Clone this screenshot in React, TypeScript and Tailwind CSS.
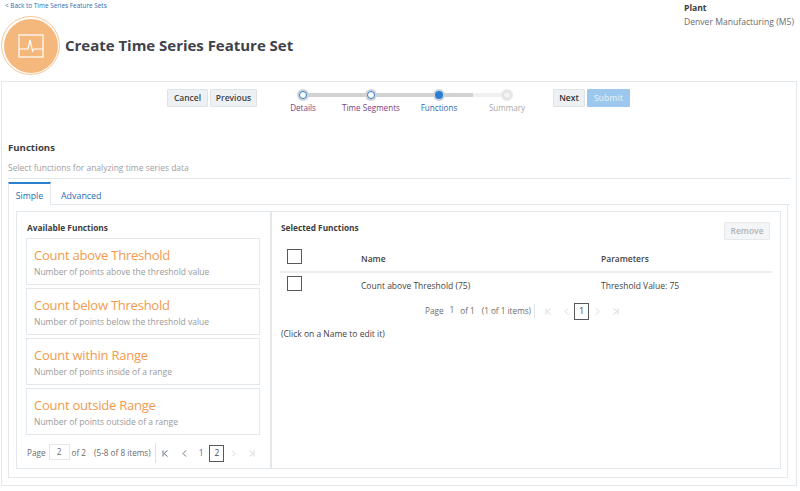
import React from "react";

const FUNCTIONS = [
  { name: "Count above Threshold", desc: "Number of points above the threshold value" },
  { name: "Count below Threshold", desc: "Number of points below the threshold value" },
  { name: "Count within Range", desc: "Number of points inside of a range" },
  { name: "Count outside Range", desc: "Number of points outside of a range" },
];

const STEPS = [
  { label: "Details", state: "done" },
  { label: "Time Segments", state: "done" },
  { label: "Functions", state: "active" },
  { label: "Summary", state: "todo" },
];

function Button({ label, className }: { label: string; className: string }) {
  return (
    <button
      className={`h-[18px] flex items-center justify-center rounded-[1px] border text-[8.5px] font-semibold ${className}`}
    >
      {label}
    </button>
  );
}

function StepDot({ state }: { state: string }) {
  if (state === "done") {
    return (
      <span className="w-[12px] h-[12px] rounded-full bg-[#cfd3d6] flex items-center justify-center">
        <span className="w-[8px] h-[8px] rounded-full bg-white border border-[#2f80d0]" />
      </span>
    );
  }
  if (state === "active") {
    return (
      <span className="w-[12px] h-[12px] rounded-full bg-[#cfd3d6] flex items-center justify-center">
        <span className="w-[8px] h-[8px] rounded-full bg-[#2a7fd4]" />
      </span>
    );
  }
  return (
    <span className="w-[12px] h-[12px] rounded-full bg-[#e8e9ea] flex items-center justify-center">
      <span className="w-[8px] h-[8px] rounded-full bg-[#f4f4f4] border border-[#dcdcdc]" />
    </span>
  );
}

function Stepper() {
  return (
    <div className="relative w-[272px] flex">
      <div className="absolute left-[34px] top-[4px] w-[170px] h-[4px] bg-[#d2d2d2]" />
      <div className="absolute left-[204px] top-[4px] w-[34px] h-[4px] bg-[#f0f0f0]" />
      {STEPS.map((s) => (
        <div key={s.label} className="relative w-[68px] flex flex-col items-center">
          <StepDot state={s.state} />
          <span
            className={`mt-[1px] text-[8.1px] leading-[12px] whitespace-nowrap ${
              s.state === "done"
                ? "text-[#7b3f86]"
                : s.state === "active"
                  ? "text-[#2b6cb0]"
                  : "text-[#a9a9a9]"
            }`}
          >
            {s.label}
          </span>
        </div>
      ))}
    </div>
  );
}

function PagerIcon({ kind, light }: { kind: "first" | "prev" | "next" | "last"; light?: boolean }) {
  const d = {
    first: "M2 1.5v6M6.5 1.5 3 4.5 6.5 7.5",
    prev: "M6 1.5 3 4.5 6 7.5",
    next: "M3 1.5 6 4.5 3 7.5",
    last: "M7 1.5v6M2.5 1.5 6 4.5 2.5 7.5",
  }[kind];
  return (
    <svg width="9" height="9" viewBox="0 0 9 9" fill="none" stroke={light ? "#d5d8db" : "#6b7280"} strokeWidth="1">
      <path d={d} />
    </svg>
  );
}

function Checkbox() {
  return <span className="block w-[15px] h-[15px] border border-[#55585c] bg-white mb-[7px]" />;
}

function AvailablePanel() {
  return (
    <div className="w-[255px] shrink-0 pl-[9px] pr-[10px] border-r-[2px] border-[#e3e8ec]">
      <h3 className="mt-[8px] ml-[1px] text-[8.3px] leading-[16px] font-bold text-[#3d3d3d]">Available Functions</h3>
      <div className="mt-[2px] flex flex-col gap-[3px]">
        {FUNCTIONS.map((f) => (
          <div key={f.name} className="h-[47px] border border-[#e3e8ec] px-[7px] pt-[6px]">
            <div className="text-[13px] leading-[21px] tracking-[-0.24px] text-[#f39a4e]">{f.name}</div>
            <div className="text-[8.5px] leading-[12px] text-[#9a9a9a]">{f.desc}</div>
          </div>
        ))}
      </div>
      <div className="mt-[8px] ml-[1px] flex items-center text-[8.2px] text-[#6b6b6b] h-[20px]">
        <span>Page</span>
        <span className="ml-[3px] w-[21px] h-[16px] border border-[#e3e8ec] flex items-center justify-center mb-[2px]">
          2
        </span>
        <span className="ml-[2px]">of 2</span>
        <span className="ml-[8px]">(5-8 of 8 items)</span>
        <span className="ml-[4px] h-[20px] border-l border-[#dfe3e6]" />
        <span className="ml-[5px] flex items-center gap-[10px]">
          <PagerIcon kind="first" />
          <PagerIcon kind="prev" />
        </span>
        <span className="ml-[10px] text-[#2b6cb0]">1</span>
        <span className="ml-[6px] w-[15px] h-[17px] border border-[#55585c] flex items-center justify-center text-[#444]">
          2
        </span>
        <span className="ml-[5px] flex items-center gap-[9px]">
          <PagerIcon kind="next" light />
          <PagerIcon kind="last" light />
        </span>
      </div>
    </div>
  );
}

function SelectedPanel() {
  return (
    <div className="flex-1 pl-[9px] pr-[8px]">
      <div className="flex justify-between items-start pt-[8px] h-[36px]">
        <h3 className="text-[8.3px] leading-[16px] font-bold text-[#3d3d3d]">Selected Functions</h3>
        <button className="mt-[2px] mr-[2px] w-[46px] h-[18px] rounded-[1px] border border-[#e6e9eb] bg-[#f3f5f6] text-[8.5px] font-semibold text-[#b0b4b8]">
          Remove
        </button>
      </div>
      <div className="-ml-[1px] flex items-center h-[25px] border-b-[2px] border-[#eceeef] text-[8.5px] font-semibold text-[#444]">
        <span className="ml-[7px] w-[74px]">
          <Checkbox />
        </span>
        <span className="w-[240px]">Name</span>
        <span>Parameters</span>
      </div>
      <div className="-ml-[1px] flex items-center h-[27px] text-[8.5px] text-[#444]">
        <span className="ml-[7px] w-[74px]">
          <Checkbox />
        </span>
        <span className="w-[240px]">Count above Threshold (75)</span>
        <span>Threshold Value: 75</span>
      </div>
      <div className="mt-[1px] ml-[144px] flex items-center h-[20px] text-[8.2px] text-[#6b6b6b]">
        <span>Page</span>
        <span className="ml-[6px] mb-[2px]">1</span>
        <span className="ml-[6px]">of 1</span>
        <span className="ml-[7px]">(1 of 1 items)</span>
        <span className="ml-[3px] h-[14px] border-l border-[#dfe3e6]" />
        <span className="ml-[9px] flex items-center gap-[9px]">
          <PagerIcon kind="first" light />
          <PagerIcon kind="prev" light />
        </span>
        <span className="ml-[3px] w-[15px] h-[17px] border border-[#55585c] flex items-center justify-center text-[#333]">
          1
        </span>
        <span className="ml-[4px] flex items-center gap-[9px]">
          <PagerIcon kind="next" light />
          <PagerIcon kind="last" light />
        </span>
      </div>
      <p className="mt-[7px] text-[8.5px] leading-[12px] text-[#444]">(Click on a Name to edit it)</p>
    </div>
  );
}

export default function App() {
  return (
    <div className="w-[800px] h-[491px] overflow-hidden bg-white font-['Open_Sans',sans-serif]">
      <header className="relative h-[81px]">
        <a className="absolute left-[5px] top-[0px] text-[6.4px] leading-[12px] text-[#2b6cb0] whitespace-nowrap">
          &lt; Back to Time Series Feature Sets
        </a>
        <div className="absolute left-[1px] top-[16px] flex items-center">
          <span className="w-[59px] h-[59px] rounded-full border border-[#f6c598] flex items-center justify-center">
            <span className="w-[54px] h-[54px] rounded-full bg-[#f5b87c] flex items-center justify-center">
              <svg width="26" height="24" viewBox="0 0 26 24" fill="none" stroke="#fff" strokeWidth="1.2">
                <rect x="1" y="1" width="24" height="22" />
                <path d="M1 15h9l2-9 2.5 11 1.5-2h9" />
              </svg>
            </span>
          </span>
          <h1 className="ml-[5px] text-[15px] tracking-[-0.02px] font-bold text-[#3f424a] whitespace-nowrap">
            Create Time Series Feature Set
          </h1>
        </div>
        <div className="absolute left-[684px] top-[2px]">
          <div className="text-[8.6px] leading-[13px] font-bold text-[#3d3d3d]">Plant</div>
          <div className="mt-[1px] text-[8.6px] leading-[13px] text-[#6b6b6b] whitespace-nowrap">
            Denver Manufacturing (M5)
          </div>
        </div>
      </header>
      <main className="ml-[1px] w-[796px] h-[405px] border border-[#e3e8ec] pt-[7px] px-[6px]">
        <div className="flex h-[30px] items-start">
          <div className="ml-[159px] flex gap-[2px]">
            <Button label="Cancel" className="w-[41px] bg-[#eef1f3] border-[#dfe3e6] text-[#444]" />
            <Button label="Previous" className="w-[47px] bg-[#eef1f3] border-[#dfe3e6] text-[#444]" />
          </div>
          <div className="ml-[12px]">
            <Stepper />
          </div>
          <div className="ml-[12px] flex gap-[2px]">
            <Button label="Next" className="w-[32px] bg-[#eef1f3] border-[#dfe3e6] text-[#333]" />
            <Button label="Submit" className="w-[43px] bg-[#9cc8ee] border-[#9cc8ee] text-[#dbe9f5]" />
          </div>
        </div>
        <h2 className="mt-[21px] text-[9.6px] leading-[16px] font-bold text-[#3d3d3d]">Functions</h2>
        <p className="mt-[6px] text-[8.5px] leading-[12px] text-[#a0a0a0]">Select functions for analyzing time series data</p>
        <div className="mt-[4px] border-t border-[#e3e8ec]" />
        <div className="mt-[3px] flex h-[23px] border-b border-[#e3e8ec]">
          <span className="w-[43px] h-[23px] pt-[4px] bg-white border-t-[2px] border-t-[#2b7fd0] border-r border-l border-[#e3e8ec] flex items-center justify-center text-[8.7px] text-[#2b6cb0]">
            Simple
          </span>
          <span className="ml-[10px] pt-[5px] flex items-center text-[8.9px] text-[#2b6cb0]">Advanced</span>
        </div>
        <div className="w-[780px] h-[273px] border border-t-0 border-[#e3e8ec] px-[7px] pt-[6px]">
          <div className="flex w-[765px] h-[258px] border border-[#e3e8ec]">
            <AvailablePanel />
            <SelectedPanel />
          </div>
        </div>
      </main>
    </div>
  );
}
